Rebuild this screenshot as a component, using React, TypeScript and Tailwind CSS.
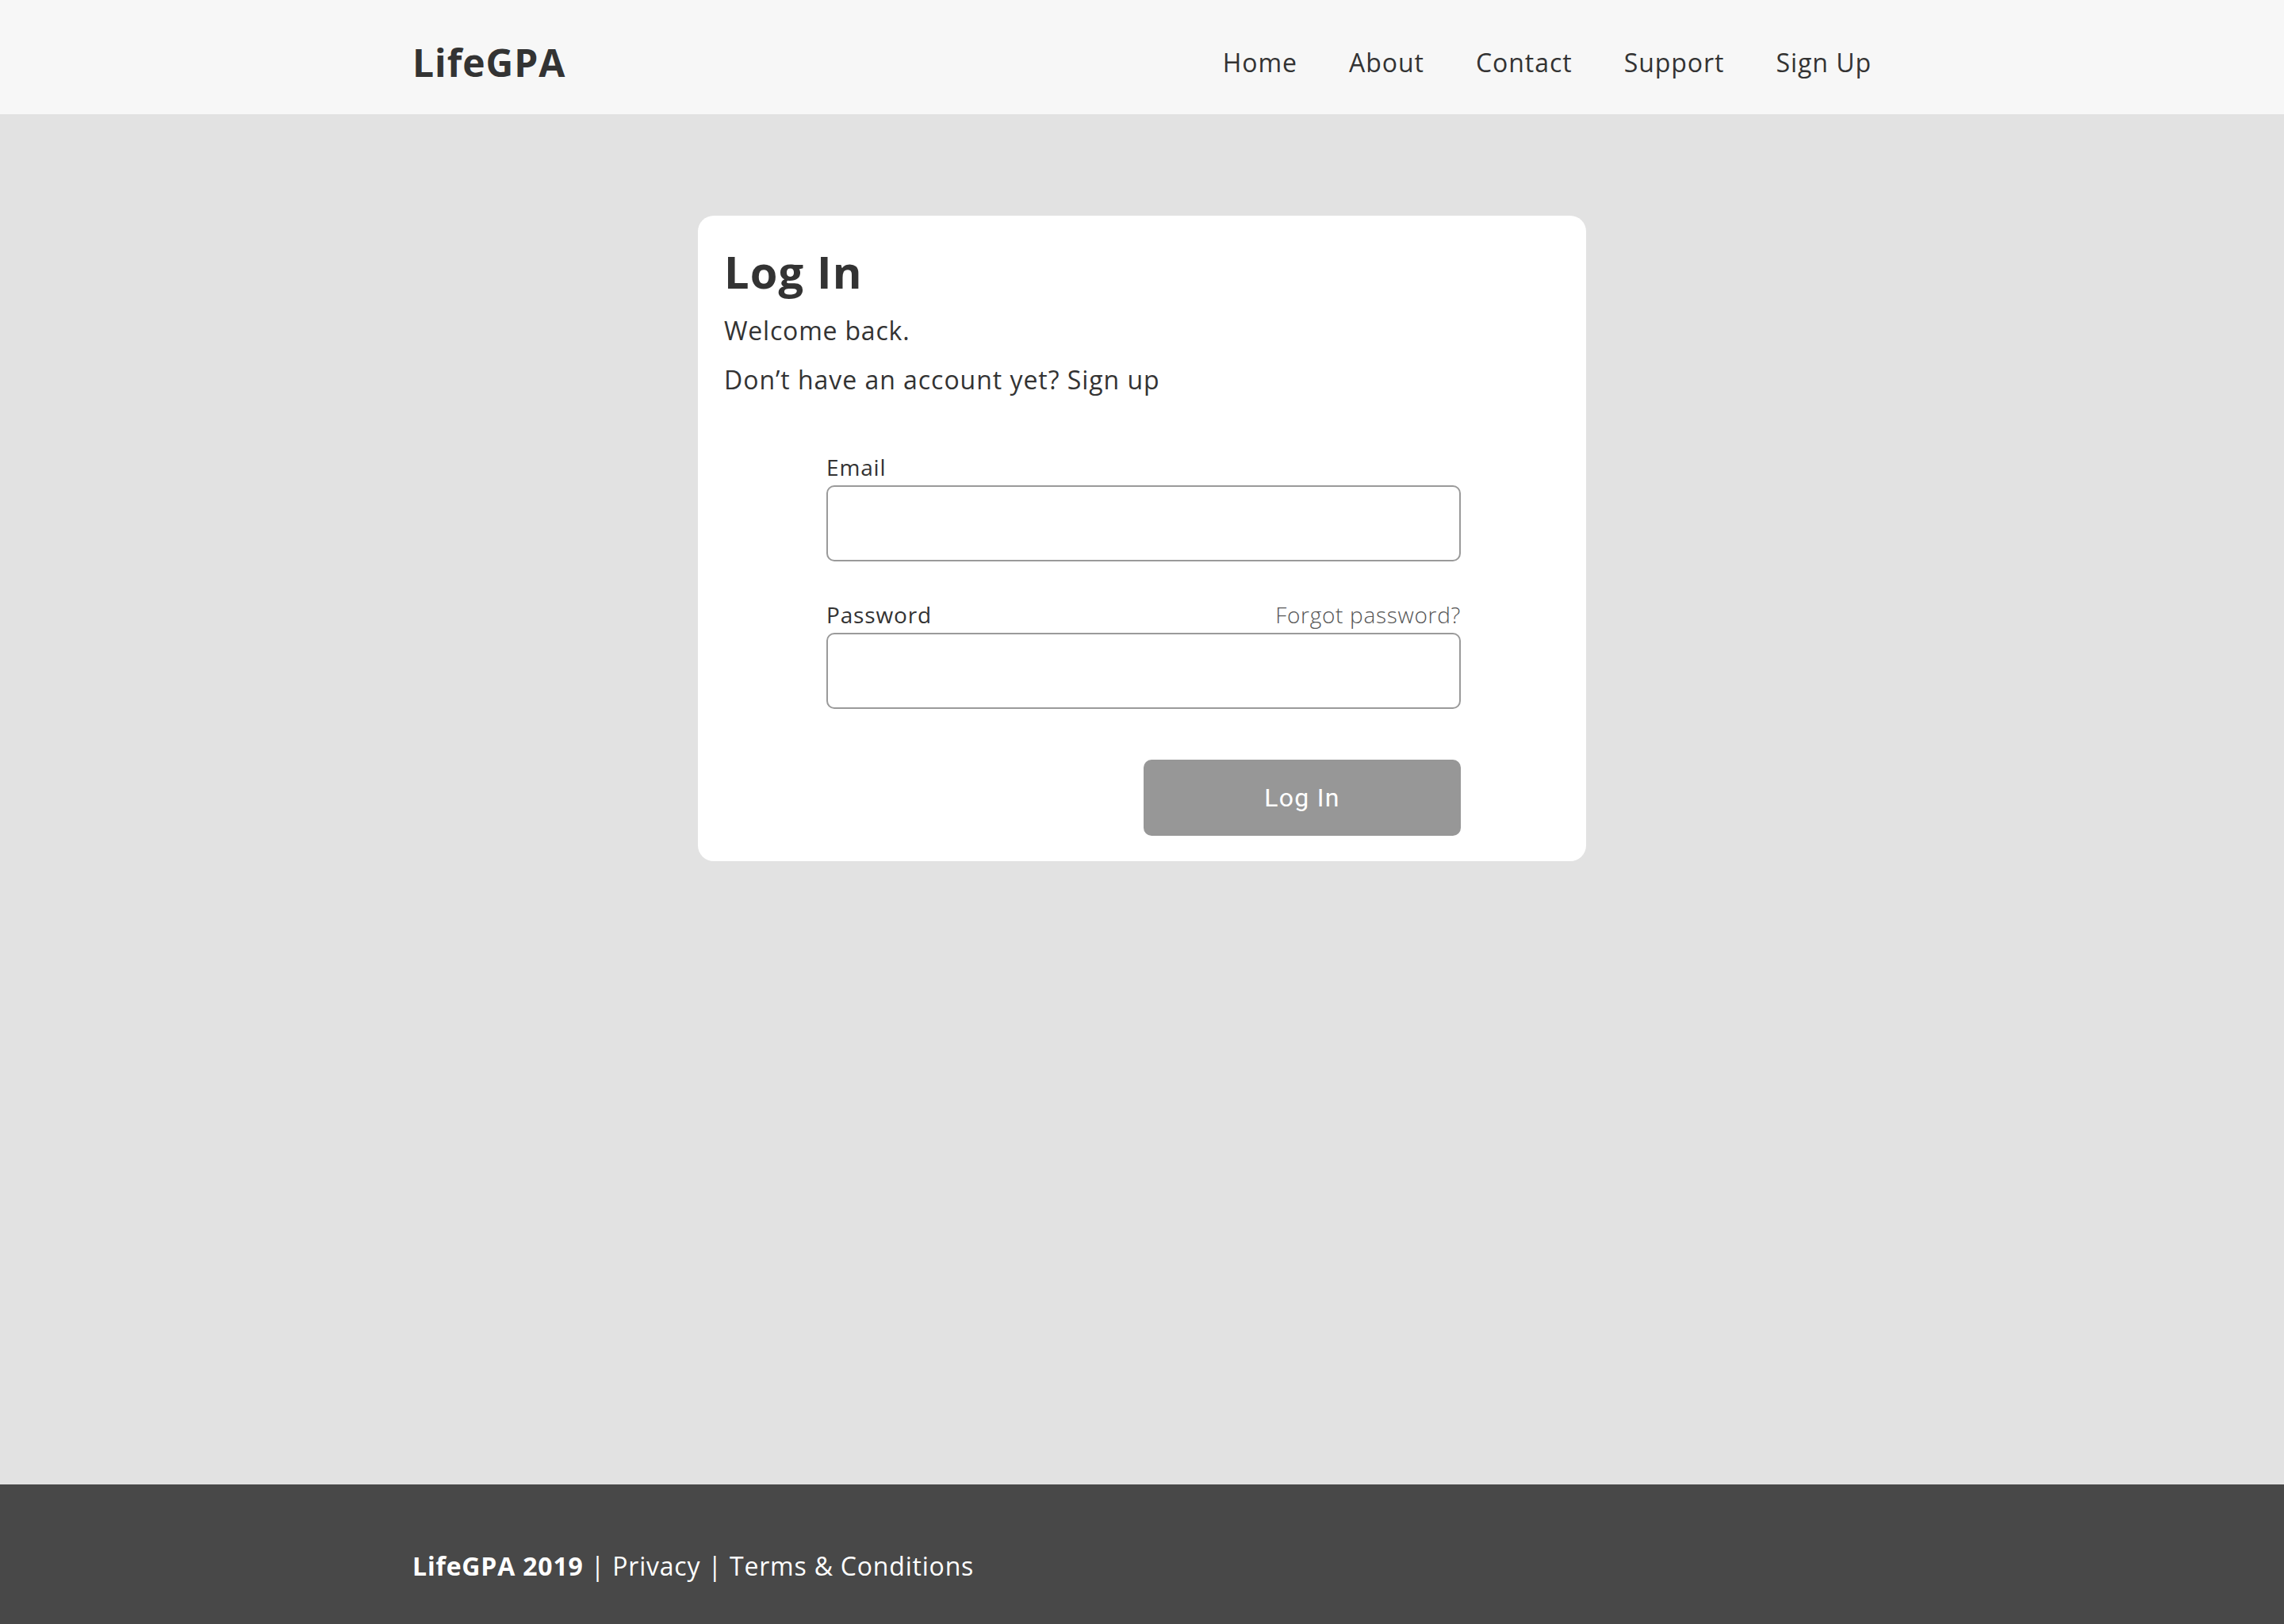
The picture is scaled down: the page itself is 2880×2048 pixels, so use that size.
const navLinks = ["Home", "About", "Contact", "Support", "Sign Up"];

function Header() {
  return (
    <header className="h-[144px] shrink-0 bg-[#f7f7f7]">
      <div className="mx-auto flex h-full max-w-[1840px] items-center justify-between pt-[14px]">
        <a href="#" className="text-[48px] font-bold leading-[66px] tracking-[0.02em] text-[#333]">
          LifeGPA
        </a>
        <nav className="flex items-center gap-[65px]">
          {navLinks.map((link) => (
            <a key={link} href="#" className="text-[32px] leading-[44px] tracking-[0.03em] text-[#333]">
              {link}
            </a>
          ))}
        </nav>
      </div>
    </header>
  );
}

function Field({ label, type, extra }: { label: string; type: string; extra?: string }) {
  return (
    <div className="flex flex-col">
      <div className="flex items-end justify-between">
        <label className="text-[28px] leading-[38px] tracking-[0.03em] text-[#333]">{label}</label>
        {extra && (
          <a href="#" className="text-[28px] font-light leading-[38px] tracking-[0.025em] text-[#555]">
            {extra}
          </a>
        )}
      </div>
      <input
        type={type}
        className="mt-[4px] h-[96px] w-full rounded-[10px] border-2 border-[#9a9a9a] bg-white px-[20px] text-[28px] outline-none"
      />
    </div>
  );
}

function LoginCard() {
  return (
    <div className="mx-auto mt-[128px] w-[1120px] rounded-[20px] bg-white pb-[32px] pl-[33px] pr-[29px] pt-[32px]">
      <h1 className="text-[56px] font-bold leading-[76px] tracking-[0.02em] text-[#333]">Log In</h1>
      <p className="mt-[15px] text-[32px] leading-[44px] tracking-[0.025em] text-[#333]">Welcome back.</p>
      <p className="mt-[18px] text-[32px] leading-[44px] tracking-[0.03em] text-[#333]">
        Don’t have an account yet? <a href="#">Sign up</a>
      </p>
      <form className="mx-auto mt-[69px] flex w-[800px] flex-col">
        <Field label="Email" type="email" />
        <div className="mt-[48px]">
          <Field label="Password" type="password" extra="Forgot password?" />
        </div>
        <div className="mt-[64px] flex justify-end">
          <button
            type="button"
            className="h-[96px] w-[400px] rounded-[10px] bg-[#979797] text-[32px] font-normal tracking-[0.04em] text-white [font-family:Roboto,sans-serif]"
          >
            Log In
          </button>
        </div>
      </form>
    </div>
  );
}

function Footer() {
  return (
    <footer className="h-[176px] shrink-0 bg-[#484848]">
      <div className="mx-auto max-w-[1840px] pt-[81px] text-[32px] leading-[44px] tracking-[0.025em] text-white">
        <span className="font-bold">LifeGPA 2019</span> | <a href="#">Privacy</a> |{" "}
        <a href="#">Terms &amp; Conditions</a>
      </div>
    </footer>
  );
}

export default function App() {
  return (
    <div className="flex min-h-screen flex-col bg-[#e2e2e2] [font-family:'Open_Sans',sans-serif]">
      <Header />
      <main className="flex-1">
        <LoginCard />
      </main>
      <Footer />
    </div>
  );
}
